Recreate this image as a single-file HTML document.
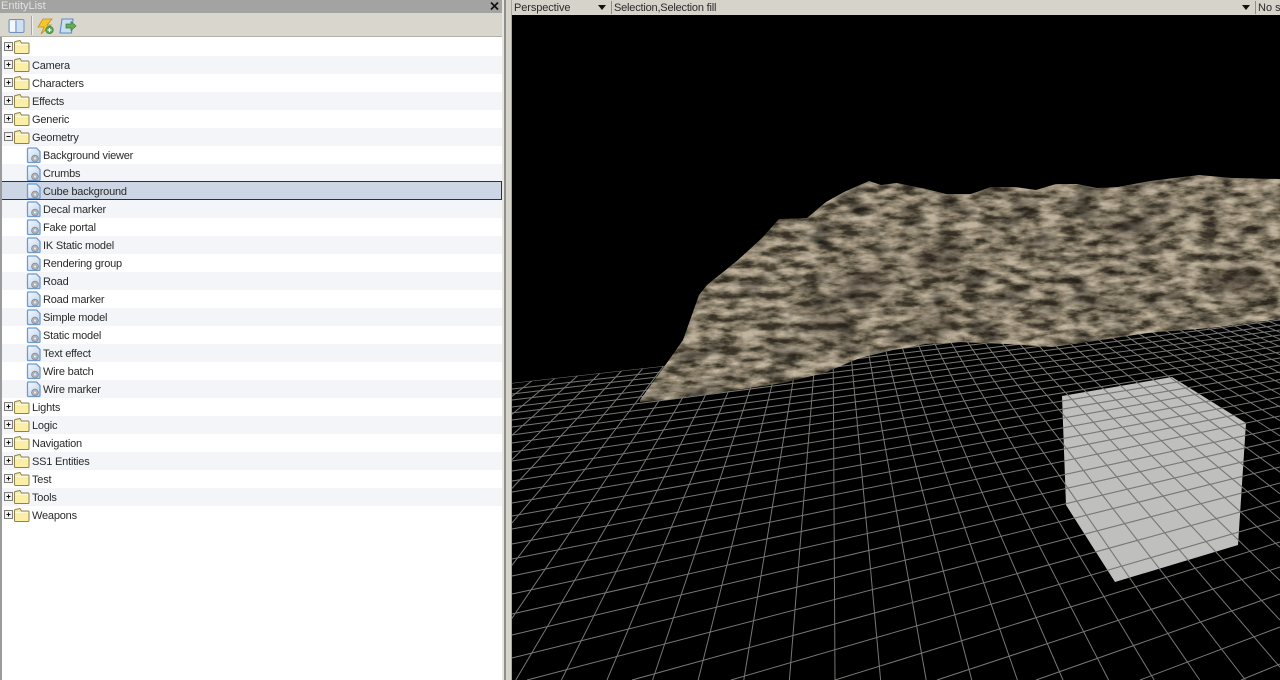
<!DOCTYPE html>
<html><head><meta charset="utf-8"><title>EntityList</title>
<style>
html,body{margin:0;padding:0;width:1280px;height:680px;overflow:hidden;background:#d6d3cb;font-family:"Liberation Sans",Arial,sans-serif;}
.abs{position:absolute}
#title{left:0;top:0;width:502px;height:13px;background:#a3a3a1;color:#e2e2e0;font-size:11px;line-height:13px;padding-left:1px;box-sizing:border-box}
#x{left:489px;top:0;width:11px;height:13px;}
#toolbar{left:0;top:13px;width:502px;height:24px;background:#d9d6ce;border-bottom:1px solid #b4b2ab;box-sizing:border-box}
#list{left:0;top:37px;width:502px;height:643px;background:#fff;border-left:2px solid #9b9b9b;box-sizing:border-box;overflow:hidden}
.r{position:absolute;left:-2px;width:502px;height:18px;font-size:11px;letter-spacing:-.2px;line-height:18px;color:#2a2a2a;white-space:nowrap}
.s{background:#f3f5f8}
.r span{position:absolute;top:1px;height:17px}
.f span{left:32px}.d span{left:43px}
.r svg{position:absolute;top:0;left:0;width:45px;height:18px}
#sel{position:absolute;left:-1px;top:144px;width:501px;height:19px;box-sizing:border-box;background:#cdd6e5;border:1.5px solid #2b3140}
#sp1{left:502px;top:0;width:2px;height:680px;background:#e8e6e1}
#sp2{left:504px;top:0;width:2px;height:680px;background:#8f8f8d}
#sp3{left:506px;top:0;width:5px;height:680px;background:#d6d3cb}
#sp4{left:511px;top:0;width:1px;height:680px;background:#a6a6a2}
#bar{left:512px;top:0;width:768px;height:15px;background:#d6d3ca;font-size:11px;line-height:14px;color:#2a2a2a}
#bar span{position:absolute;top:1px;height:14px;white-space:nowrap}
#bar i{position:absolute;top:1px;width:1px;height:13px;background:#8f8d88}
#bar b{position:absolute;top:5px;width:0;height:0;border-left:4px solid transparent;border-right:4px solid transparent;border-top:5px solid #111}
#view{left:512px;top:15px;width:768px;height:665px;background:#000;overflow:hidden}
#view svg{position:absolute;left:-512px;top:-15px}
</style></head>
<body>
<svg width="0" height="0" style="position:absolute;left:0;top:0">
<defs>
<linearGradient id="dg" x1="0" y1="0" x2="1" y2="1"><stop offset="0" stop-color="#f4f8fd"/><stop offset="1" stop-color="#bcd2ea"/></linearGradient>
<symbol id="folder" viewBox="0 0 45 18">
<path d="M14.500 4.500 Q14.500 3.500 15.500 3.500 L20 2.500 L21.500 5 L28 5 Q29 5 29 6 L29 14.500 Q29 15.500 28 15.500 L15.500 15.500 Q14.500 15.500 14.500 14.500 Z" fill="#fbeea6" stroke="#8f8250" stroke-width="1"/>
<path d="M15.500 6.500 H28" stroke="#fffbd8" stroke-width="1"/>
</symbol>
<symbol id="plus" viewBox="0 0 45 18">
<rect x="4.500" y="4.500" width="8" height="8" fill="#f2f2f0" stroke="#7d7d7d"/>
<path d="M6.500 8.500 H10.500 M8.500 6.500 V10.500" stroke="#111" stroke-width="1"/>
</symbol>
<symbol id="minus" viewBox="0 0 45 18">
<rect x="4.500" y="4.500" width="8" height="8" fill="#f2f2f0" stroke="#7d7d7d"/>
<path d="M6.500 8.500 H10.500" stroke="#111" stroke-width="1"/>
</symbol>
<symbol id="doc" viewBox="0 0 45 18">
<path d="M27.500 3 Q27.500 2 28.500 2 H36.500 L40 5.500 V15.500 Q40 16.500 39 16.500 H28.500 Q27.500 16.500 27.500 15.500 Z" fill="url(#dg)" stroke="#6d9ad0" stroke-width="1.300"/>
<circle cx="35" cy="12.500" r="3.400" fill="#aeb2b7" stroke="#868b92" stroke-width=".8"/>
<circle cx="35" cy="12.500" r="1.100" fill="#e6e9ec"/>
</symbol>
</defs>
</svg>

<div class="abs" id="title">EntityList</div>
<svg class="abs" id="x" viewBox="0 0 11 13"><path d="M2 2.500 L9 9.500 M9 2.500 L2 9.500" stroke="#111" stroke-width="1.700"/></svg>

<div class="abs" id="toolbar">
<svg width="90" height="23" style="position:absolute;left:0;top:0">
<rect x="9" y="6.500" width="15" height="13" rx="1.500" fill="#cfe0f3" stroke="#6f93bd"/>
<rect x="10" y="7.500" width="5" height="11" fill="#f5f8fb"/>
<path d="M16 7.500 V19" stroke="#6f93bd"/>
<path d="M31.500 3 V22" stroke="#a9a79f"/>
<path d="M32.500 3 V22" stroke="#f2f0ea"/>
<path d="M43 6 L52 6 L47 12 L51 12 L41 21 L44 14 L38 14 Z" fill="#f3c62e" stroke="#c2901a" stroke-width=".8"/>
<circle cx="49.500" cy="17" r="3.800" fill="#56a954" stroke="#3c7a3c" stroke-width=".6"/>
<path d="M47.500 17 H51.500 M49.500 15 V19" stroke="#fff" stroke-width="1.200"/>
<path d="M62 6 H73 L71.500 20 H60 Z" fill="#c9ddf2" stroke="#5d8cc4" stroke-width="1.100"/>
<path d="M66 11 H71 V8.500 L76 13 L71 17.500 V15 H66 Z" fill="#5fae55" stroke="#3c7a3c" stroke-width=".7"/>
</svg>
</div>

<div class="abs" id="list">
<div class="r f" style="top:1px"><svg><use href="#plus"/><use href="#folder"/></svg><span></span></div>
<div class="r f s" style="top:19px"><svg><use href="#plus"/><use href="#folder"/></svg><span>Camera</span></div>
<div class="r f" style="top:37px"><svg><use href="#plus"/><use href="#folder"/></svg><span>Characters</span></div>
<div class="r f s" style="top:55px"><svg><use href="#plus"/><use href="#folder"/></svg><span>Effects</span></div>
<div class="r f" style="top:73px"><svg><use href="#plus"/><use href="#folder"/></svg><span>Generic</span></div>
<div class="r f s" style="top:91px"><svg><use href="#minus"/><use href="#folder"/></svg><span>Geometry</span></div>
<div class="r d" style="top:109px"><svg><use href="#doc"/></svg><span>Background viewer</span></div>
<div class="r d s" style="top:127px"><svg><use href="#doc"/></svg><span>Crumbs</span></div>
<div id="sel"></div>
<div class="r d" style="top:145px"><svg><use href="#doc"/></svg><span>Cube background</span></div>
<div class="r d s" style="top:163px"><svg><use href="#doc"/></svg><span>Decal marker</span></div>
<div class="r d" style="top:181px"><svg><use href="#doc"/></svg><span>Fake portal</span></div>
<div class="r d s" style="top:199px"><svg><use href="#doc"/></svg><span>IK Static model</span></div>
<div class="r d" style="top:217px"><svg><use href="#doc"/></svg><span>Rendering group</span></div>
<div class="r d s" style="top:235px"><svg><use href="#doc"/></svg><span>Road</span></div>
<div class="r d" style="top:253px"><svg><use href="#doc"/></svg><span>Road marker</span></div>
<div class="r d s" style="top:271px"><svg><use href="#doc"/></svg><span>Simple model</span></div>
<div class="r d" style="top:289px"><svg><use href="#doc"/></svg><span>Static model</span></div>
<div class="r d s" style="top:307px"><svg><use href="#doc"/></svg><span>Text effect</span></div>
<div class="r d" style="top:325px"><svg><use href="#doc"/></svg><span>Wire batch</span></div>
<div class="r d s" style="top:343px"><svg><use href="#doc"/></svg><span>Wire marker</span></div>
<div class="r f" style="top:361px"><svg><use href="#plus"/><use href="#folder"/></svg><span>Lights</span></div>
<div class="r f s" style="top:379px"><svg><use href="#plus"/><use href="#folder"/></svg><span>Logic</span></div>
<div class="r f" style="top:397px"><svg><use href="#plus"/><use href="#folder"/></svg><span>Navigation</span></div>
<div class="r f s" style="top:415px"><svg><use href="#plus"/><use href="#folder"/></svg><span>SS1 Entities</span></div>
<div class="r f" style="top:433px"><svg><use href="#plus"/><use href="#folder"/></svg><span>Test</span></div>
<div class="r f s" style="top:451px"><svg><use href="#plus"/><use href="#folder"/></svg><span>Tools</span></div>
<div class="r f" style="top:469px"><svg><use href="#plus"/><use href="#folder"/></svg><span>Weapons</span></div>
</div>

<div class="abs" id="sp1"></div><div class="abs" id="sp2"></div><div class="abs" id="sp3"></div><div class="abs" id="sp4"></div>

<div class="abs" id="bar">
<span style="left:2px;letter-spacing:-.1px">Perspective</span><b style="left:86px"></b><i style="left:99px"></i>
<span style="left:102px;letter-spacing:-.2px">Selection,Selection fill</span><b style="left:730px"></b><i style="left:743px"></i>
<span style="left:746px;width:22px;overflow:hidden">No s</span>
</div>

<div class="abs" id="view">
<svg width="1280" height="680" viewBox="0 0 1280 680">
<defs>
<filter id="rock" x="0" y="0" width="100%" height="100%" color-interpolation-filters="sRGB">
<feTurbulence type="fractalNoise" baseFrequency="0.05 0.13" numOctaves="5" seed="11" result="n"/>
<feColorMatrix in="n" type="matrix" values="1.900 0 0 0 -0.450  1.900 0 0 0 -0.450  1.900 0 0 0 -0.450  0 0 0 0 1" result="g"/>
<feComponentTransfer in="g" result="c">
<feFuncR type="table" tableValues="0.24 0.36 0.52 0.64 0.74 0.82"/>
<feFuncG type="table" tableValues="0.21 0.33 0.48 0.59 0.69 0.77"/>
<feFuncB type="table" tableValues="0.17 0.26 0.40 0.50 0.60 0.68"/>
</feComponentTransfer>
<feTurbulence type="fractalNoise" baseFrequency="0.03 0.055" numOctaves="3" seed="4" result="m"/>
<feColorMatrix in="m" type="matrix" values="3.400 0 0 0 -0.700  3.400 0 0 0 -0.700  3.400 0 0 0 -0.700  0 0 0 0 1" result="mm"/>
<feComposite in="c" in2="mm" operator="arithmetic" k1="0.42" k2="0.50" k3="0" k4="0" result="mix"/>
<feComposite in="mix" in2="SourceAlpha" operator="in"/>
</filter>
<clipPath id="gc"><polygon points="512,383 1280,297 1280,680 512,680"/></clipPath>
<clipPath id="cc"><polygon points="1062,396 1172,377 1246,423 1238,545 1115,582 1066,505"/></clipPath>
<clipPath id="tc"><polygon points="640,400 664,367 683,340 699,295 707,285 738,260 762,238 779,219 807,218 826,202 844,192 869,181 881,185 897,183 926,189 946,194 971,194 991,187 1015,187 1036,190 1056,184 1077,184 1097,188 1118,187 1150,181 1199,175 1232,178 1280,179 1280,319 1211,328 1146,333 1089,342 1052,347 1007,344 958,342 926,344 893,350 860,358 824,373 783,383 722,392 664,400 640,402"/></clipPath>
<filter id="soft"><feGaussianBlur stdDeviation="0.3"/></filter>
<filter id="b8" x="-50%" y="-50%" width="200%" height="200%"><feGaussianBlur stdDeviation="7"/></filter>
<g id="grid">
<line x1="1241" y1="680" x2="1280" y2="664"/><line x1="1140" y1="680" x2="1280" y2="627"/><line x1="1036" y1="680" x2="1280" y2="594"/><line x1="937" y1="680" x2="1280" y2="567"/><line x1="835" y1="680" x2="1280" y2="542"/><line x1="731" y1="680" x2="1280" y2="520"/><line x1="632" y1="680" x2="1280" y2="501"/><line x1="527" y1="680" x2="1280" y2="483"/><line x1="512" y1="658" x2="1280" y2="467"/><line x1="512" y1="635" x2="1280" y2="453"/><line x1="512" y1="614" x2="1280" y2="440"/><line x1="512" y1="594" x2="1280" y2="428"/><line x1="512" y1="576" x2="1280" y2="416"/><line x1="512" y1="559" x2="1280" y2="406"/><line x1="512" y1="544" x2="1280" y2="397"/><line x1="512" y1="529" x2="1280" y2="388"/><line x1="512" y1="516" x2="1280" y2="379.500"/><line x1="512" y1="503" x2="1280" y2="372"/><line x1="512" y1="492" x2="1280" y2="365"/><line x1="512" y1="481" x2="1280" y2="358"/><line x1="512" y1="471" x2="1280" y2="352"/><line x1="512" y1="461" x2="1280" y2="346"/><line x1="512" y1="452" x2="1280" y2="340"/><line x1="512" y1="443" x2="1280" y2="335"/><line x1="512" y1="435" x2="1280" y2="330"/><line x1="512" y1="427" x2="1280" y2="325"/><line x1="512" y1="420" x2="1280" y2="320"/><line x1="512" y1="413" x2="1280" y2="316"/><line x1="512" y1="407" x2="1280" y2="312"/><line x1="512" y1="400" x2="1280" y2="308"/><line x1="512" y1="394" x2="1280" y2="304"/><line x1="512" y1="389" x2="1280" y2="301"/><line x1="512" y1="383" x2="1280" y2="297"/>
<line x1="832" y1="145" x2="512" y2="396.400"/><line x1="832" y1="145" x2="512" y2="414.400"/><line x1="832" y1="145" x2="512" y2="435.300"/><line x1="832" y1="145" x2="512" y2="459.600"/><line x1="832" y1="145" x2="512" y2="488.400"/><line x1="832" y1="145" x2="512" y2="522.900"/><line x1="832" y1="145" x2="512" y2="565.200"/><line x1="832" y1="145" x2="512" y2="618.200"/><line x1="832" y1="145" x2="515.800" y2="680"/><line x1="832" y1="145" x2="561.400" y2="680"/><line x1="832" y1="145" x2="607" y2="680"/><line x1="832" y1="145" x2="652.600" y2="680"/><line x1="832" y1="145" x2="698.200" y2="680"/><line x1="832" y1="145" x2="743.800" y2="680"/><line x1="832" y1="145" x2="789.400" y2="680"/><line x1="832" y1="145" x2="835" y2="680"/><line x1="832" y1="145" x2="880.600" y2="680"/><line x1="832" y1="145" x2="926.200" y2="680"/><line x1="832" y1="145" x2="971.800" y2="680"/><line x1="832" y1="145" x2="1017.400" y2="680"/><line x1="832" y1="145" x2="1063" y2="680"/><line x1="832" y1="145" x2="1108.600" y2="680"/><line x1="832" y1="145" x2="1154.200" y2="680"/><line x1="832" y1="145" x2="1199.800" y2="680"/><line x1="832" y1="145" x2="1245.400" y2="680"/><line x1="832" y1="145" x2="1280" y2="667.200"/><line x1="832" y1="145" x2="1280" y2="620"/><line x1="832" y1="145" x2="1280" y2="580.600"/><line x1="832" y1="145" x2="1280" y2="547.300"/><line x1="832" y1="145" x2="1280" y2="518.700"/><line x1="832" y1="145" x2="1280" y2="493.900"/><line x1="832" y1="145" x2="1280" y2="472.200"/><line x1="832" y1="145" x2="1280" y2="453"/><line x1="832" y1="145" x2="1280" y2="435.900"/><line x1="832" y1="145" x2="1280" y2="420.700"/><line x1="832" y1="145" x2="1280" y2="406.900"/><line x1="832" y1="145" x2="1280" y2="394.500"/><line x1="832" y1="145" x2="1280" y2="383.200"/><line x1="832" y1="145" x2="1280" y2="372.900"/><line x1="832" y1="145" x2="1280" y2="363.400"/><line x1="832" y1="145" x2="1280" y2="354.700"/><line x1="832" y1="145" x2="1280" y2="346.600"/><line x1="832" y1="145" x2="1280" y2="339.200"/><line x1="832" y1="145" x2="1280" y2="332.300"/><line x1="832" y1="145" x2="1280" y2="325.800"/><line x1="832" y1="145" x2="1280" y2="319.800"/>
</g>
</defs>

<polygon points="1062,396 1172,377 1246,423 1238,545 1115,582 1066,505" fill="#bfbfbd"/>

<g clip-path="url(#gc)" filter="url(#soft)">
<use href="#grid" stroke="#777775" stroke-width="1"/>
</g>
<g clip-path="url(#cc)">
<use href="#grid" stroke="#7a7a78" stroke-width="1"/>
</g>

<polygon filter="url(#rock)" fill="#000" points="640,400 664,367 683,340 699,295 707,285 738,260 762,238 779,219 807,218 826,202 844,192 869,181 881,185 897,183 926,189 946,194 971,194 991,187 1015,187 1036,190 1056,184 1077,184 1097,188 1118,187 1150,181 1199,175 1232,178 1280,179 1280,319 1211,328 1146,333 1089,342 1052,347 1007,344 958,342 926,344 893,350 860,358 824,373 783,383 722,392 664,400 640,402"/>
<g clip-path="url(#tc)">
<g filter="url(#b8)" fill="#2c241a" opacity=".4">
<ellipse cx="934" cy="262" rx="22" ry="12"/>
<ellipse cx="868" cy="283" rx="26" ry="12"/>
<ellipse cx="938" cy="323" rx="22" ry="9"/>
<ellipse cx="1126" cy="227" rx="24" ry="12"/>
<ellipse cx="1240" cy="280" rx="26" ry="14"/>
<ellipse cx="830" cy="325" rx="24" ry="12"/>
</g>
</g>
</svg>
</div>
</body></html>
